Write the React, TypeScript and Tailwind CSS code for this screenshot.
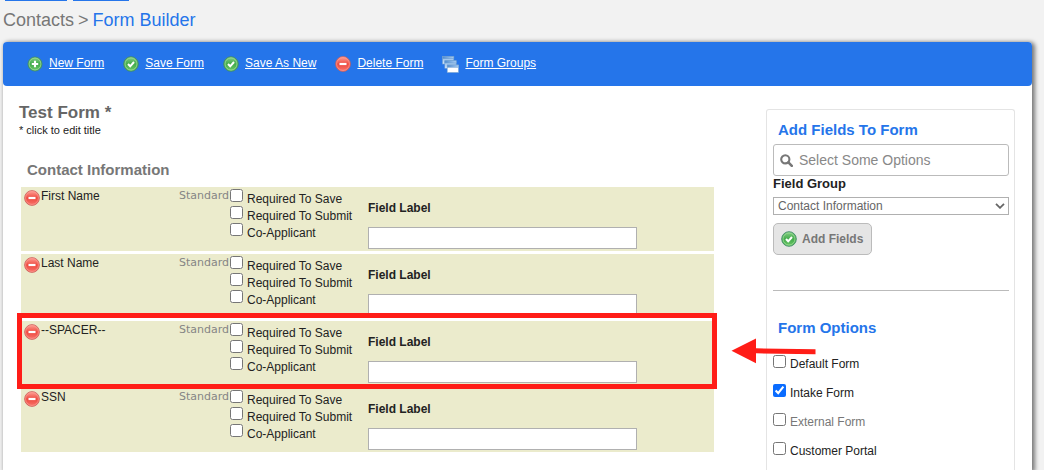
import { ReactNode } from "react";

function Gradients() {
  return (
    <svg width="0" height="0" className="absolute" aria-hidden="true">
      <defs>
        <linearGradient id="green" x1="0" y1="0" x2="0" y2="1">
          <stop offset="0" stopColor="#86cf86" />
          <stop offset="0.5" stopColor="#43ab4c" />
          <stop offset="1" stopColor="#6cc868" />
        </linearGradient>
        <linearGradient id="red" x1="0" y1="0" x2="0" y2="1">
          <stop offset="0" stopColor="#ffa399" />
          <stop offset="0.5" stopColor="#ee4a40" />
          <stop offset="1" stopColor="#f8746c" />
        </linearGradient>
        <linearGradient id="titlebar" x1="0" y1="0" x2="1" y2="0">
          <stop offset="0" stopColor="#4f8bd0" />
          <stop offset="1" stopColor="#a9cdf3" />
        </linearGradient>
        <linearGradient id="pane" x1="0" y1="0" x2="0" y2="1">
          <stop offset="0" stopColor="#86b6ea" />
          <stop offset="1" stopColor="#d3e6fa" />
        </linearGradient>
      </defs>
    </svg>
  );
}

function PlusIcon() {
  return (
    <svg viewBox="0 0 16 16" className="size-4 shrink-0" aria-hidden="true">
      <circle cx="8" cy="8" r="7" fill="url(#green)" stroke="#3f8a68" strokeWidth="0.9" />
      <circle cx="8" cy="8" r="5.9" fill="none" stroke="#9bdb94" strokeWidth="0.8" />
      <path d="M8 4.8v6.4M4.8 8h6.4" stroke="#fff" strokeWidth="2.1" />
    </svg>
  );
}

function CheckIcon() {
  return (
    <svg viewBox="0 0 16 16" className="size-4 shrink-0" aria-hidden="true">
      <circle cx="8" cy="8" r="7.3" fill="url(#green)" stroke="#3f8a68" strokeWidth="0.9" />
      <circle cx="8" cy="8" r="6" fill="none" stroke="#9bdb94" strokeWidth="0.8" />
      <path d="M5 8l2.2 2.3L11 6" fill="none" stroke="#fff" strokeWidth="2" />
    </svg>
  );
}

function MinusIcon() {
  return (
    <svg viewBox="0 0 16 16" className="size-4 shrink-0" aria-hidden="true">
      <circle cx="8" cy="8" r="7.4" fill="url(#red)" stroke="#c9605c" strokeWidth="0.8" />
      <circle cx="8" cy="8" r="6.4" fill="none" stroke="#ff9d94" strokeWidth="0.7" />
      <path d="M4.5 8h7" stroke="#fff" strokeWidth="2.2" />
    </svg>
  );
}

function WindowsIcon() {
  return (
    <svg viewBox="0 0 18 18" className="size-[17px] shrink-0" aria-hidden="true">
      <g strokeWidth="0.6" stroke="#6f9fd0">
        <rect x="0.5" y="0.5" width="12" height="8" fill="url(#pane)" />
        <rect x="0.5" y="0.5" width="12" height="2.4" fill="url(#titlebar)" />
        <rect x="3" y="5" width="12" height="8" fill="url(#pane)" />
        <rect x="3" y="5" width="12" height="2.4" fill="url(#titlebar)" />
        <rect x="5.5" y="9.5" width="12" height="8" fill="#fff" />
        <rect x="5.5" y="9.5" width="12" height="2.4" fill="url(#titlebar)" />
      </g>
    </svg>
  );
}

const actions: { label: string; icon: ReactNode }[] = [
  { label: "New Form", icon: <PlusIcon /> },
  { label: "Save Form", icon: <CheckIcon /> },
  { label: "Save As New", icon: <CheckIcon /> },
  { label: "Delete Form", icon: <MinusIcon /> },
  { label: "Form Groups", icon: <WindowsIcon /> },
];

const fields = [
  { name: "First Name" },
  { name: "Last Name" },
  { name: "--SPACER--", marked: true },
  { name: "SSN" },
];

const flags = ["Required To Save", "Required To Submit", "Co-Applicant"];

const options = [
  { label: "Default Form" },
  { label: "Intake Form", checked: true },
  { label: "External Form", muted: true },
  { label: "Customer Portal" },
];

function Callout() {
  return (
    <>
      <div className="pointer-events-none absolute -top-2 -right-[3px] -bottom-1 -left-1 z-10 border-[5px] border-[#ff1d17]" />
      <svg
        viewBox="0 0 85 26"
        className="pointer-events-none absolute top-[17px] left-full z-10 ml-[17px] h-[26px] w-[85px]"
        aria-hidden="true"
      >
        <path d="M0.5 12.7L25 0.5V10.3L84.5 11.2V16.2L25 15.3V25.2Z" fill="#ff1d17" />
      </svg>
    </>
  );
}

function FieldRow({ name, marked }: { name: string; marked?: boolean }) {
  return (
    <li className="relative flex h-16 bg-[#ebebcc] pl-[3px]">
      <button type="button" aria-label={`Remove ${name}`} className="mt-[3px] size-4">
        <MinusIcon />
      </button>
      <span className="mt-px w-[139px] pl-px leading-4">{name}</span>
      <span className="mt-px w-[51px] font-['DejaVu_Sans',sans-serif] text-[11px] leading-4 text-[#858585]">
        Standard
      </span>
      <div className="w-[138px] pt-0.5">
        {flags.map((flag) => (
          <label key={flag} className="flex h-[17px] items-start gap-1">
            <input type="checkbox" className="size-[13px]" />
            <span className="pt-0.5 leading-4">{flag}</span>
          </label>
        ))}
      </div>
      <label className="flex flex-col gap-[11px] pt-[13px] font-bold leading-4">
        Field Label
        <input type="text" className="h-[22px] w-[269px] border border-[#b0b0b0] bg-white px-1 font-normal" />
      </label>
      {marked && <Callout />}
    </li>
  );
}

export default function App() {
  return (
    <div className="flex min-h-screen flex-col bg-[#f2f2f2] pr-3 pl-[3px] font-['Liberation_Sans',Arial,sans-serif] text-xs text-[#222]">
      <Gradients />
      <div className="flex h-px gap-1.5 pl-0.5">
        <div className="w-[62px] bg-[#2575ea]" />
        <div className="w-14 bg-[#2575ea]" />
      </div>
      <nav className="flex h-[41px] gap-1 pt-[7px] text-lg leading-6 text-[#777]">
        <a href="#contacts">Contacts</a>
        <span>&gt;</span>
        <a href="#form-builder" className="text-[#2575ea]">
          Form Builder
        </a>
      </nav>
      <main className="flex flex-1 flex-col rounded-t-[4px] bg-white shadow-[2px_1px_4px_1px_rgba(0,0,0,0.5)]">
        <header className="flex h-11 items-center gap-[19px] rounded-[4px] bg-[#2575ea] pl-6 text-white">
          {actions.map(({ label, icon }) => (
            <a key={label} href="#action" className="flex items-center gap-1.5 underline">
              {icon}
              <span className="pb-0.5 leading-4">{label}</span>
            </a>
          ))}
        </header>
        <div className="flex flex-1 gap-[52px] pr-[17px] pl-4">
          <section className="min-w-0 flex-1 pt-4">
            <h1 className="text-[17px] leading-[22px] font-bold text-[#666]">Test Form *</h1>
            <p className="text-[11px] leading-3">* click to edit title</p>
            <h2 className="mt-6 mb-2 pl-2 text-[15px] leading-[19px] font-bold text-[#777]">Contact Information</h2>
            <ul className="flex flex-col gap-[3px] pl-0.5">
              {fields.map((field) => (
                <FieldRow key={field.name} {...field} />
              ))}
            </ul>
          </section>
          <aside className="mt-[23px] w-[249px] rounded-t-[3px] border border-b-0 border-[#e4e4e4] pt-2.5 pr-[5px] pl-1.5">
            <h2 className="pl-[5px] text-[15px] leading-5 font-bold text-[#2575ea]">Add Fields To Form</h2>
            <div className="mt-1 flex h-8 items-center gap-1.5 rounded-[3px] border border-[#bbb] pl-1.5">
              <svg viewBox="0 0 13 13" className="size-[13px] shrink-0" fill="none" stroke="#777" aria-hidden="true">
                <circle cx="5.3" cy="5.3" r="4.1" strokeWidth="2.1" />
                <path d="M8.4 8.4l3.4 3.4" strokeWidth="2.6" strokeLinecap="round" />
              </svg>
              <input
                type="text"
                aria-label="Fields"
                placeholder="Select Some Options"
                className="min-w-0 flex-1 text-sm leading-5 outline-none placeholder:text-[#888]"
              />
            </div>
            <label className="flex flex-col text-[13px] leading-4 font-bold">
              Field Group
              <span className="relative mt-[5px] flex">
                <select className="h-[18px] flex-1 appearance-none border border-[#b0b0b0] bg-white pl-1 text-xs leading-4 font-normal text-[#666]">
                  <option>Contact Information</option>
                </select>
                <svg
                  viewBox="0 0 10 6"
                  className="pointer-events-none absolute top-1.5 right-1 h-1.5 w-2.5"
                  fill="none"
                  stroke="#666"
                  strokeWidth="1.8"
                  aria-hidden="true"
                >
                  <path d="M1 0.8l4 4 4-4" />
                </svg>
              </span>
            </label>
            <button
              type="button"
              className="mt-2 flex h-8 items-center gap-[5px] rounded-[5px] border border-[#bbb] bg-[#e5e5e5] pr-2 pl-[7px] font-bold text-[#777]"
            >
              <CheckIcon />
              Add Fields
            </button>
            <hr className="mt-[35px] border-[#bbb]" />
            <h2 className="mt-[27px] pl-[5px] text-[15px] leading-5 font-bold text-[#2575ea]">Form Options</h2>
            <div className="mt-[17px] flex flex-col gap-3">
              {options.map(({ label, checked, muted }) => (
                <label key={label} className="flex items-start gap-1">
                  <input type="checkbox" defaultChecked={checked} className="size-[13px] accent-[#0a6cff]" />
                  <span className={muted ? "pt-px leading-4 text-[#777]" : "pt-px leading-4"}>{label}</span>
                </label>
              ))}
            </div>
          </aside>
        </div>
      </main>
    </div>
  );
}
